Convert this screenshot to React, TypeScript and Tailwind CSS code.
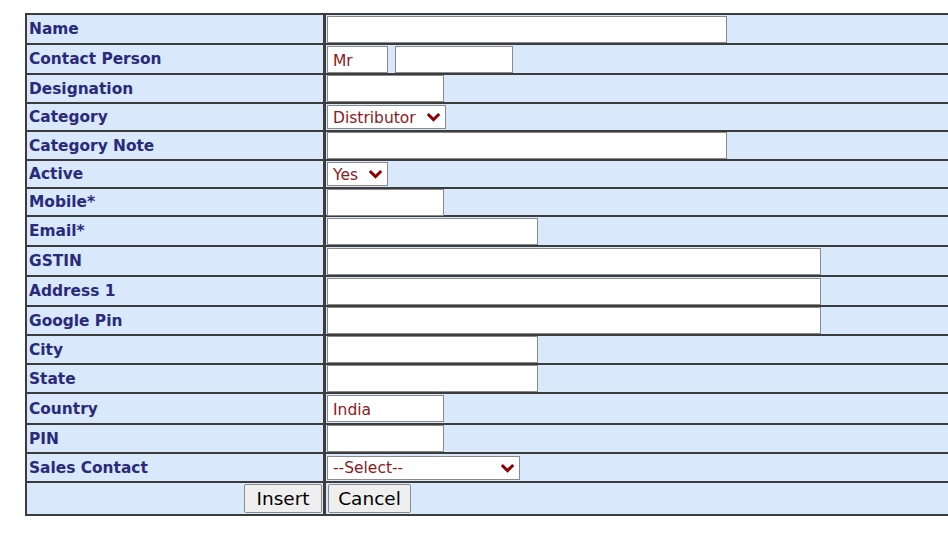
import React from "react";

type Field =
  | { label: string; kind: "text"; width: number; value?: string; h: number }
  | { label: string; kind: "select"; width: number; value: string; h: number }
  | { label: string; kind: "contact"; h: number };

const fields: Field[] = [
  { label: "Name", kind: "text", width: 400, h: 30 },
  { label: "Contact Person", kind: "contact", h: 30 },
  { label: "Designation", kind: "text", width: 117, h: 29 },
  { label: "Category", kind: "select", width: 119, value: "Distributor", h: 28 },
  { label: "Category Note", kind: "text", width: 400, h: 29 },
  { label: "Active", kind: "select", width: 61, value: "Yes", h: 28 },
  { label: "Mobile*", kind: "text", width: 117, h: 28 },
  { label: "Email*", kind: "text", width: 211, h: 30 },
  { label: "GSTIN", kind: "text", width: 494, h: 30 },
  { label: "Address 1", kind: "text", width: 494, h: 30 },
  { label: "Google Pin", kind: "text", width: 494, h: 29 },
  { label: "City", kind: "text", width: 211, h: 29 },
  { label: "State", kind: "text", width: 211, h: 29 },
  { label: "Country", kind: "text", width: 117, value: "India", h: 31 },
  { label: "PIN", kind: "text", width: 117, h: 29 },
  { label: "Sales Contact", kind: "select", width: 193, value: "--Select--", h: 29 },
];

const inputCls =
  "h-[27px] border border-[#8a8a8a] bg-white px-[5px] pt-[3px] text-[15.5px] text-[#8b1a1a] outline-none";

function Chevron() {
  return (
    <svg width="15" height="10" viewBox="0 0 15 10" className="shrink-0">
      <path d="M1.8 2 L7.5 7.6 L13.2 2" fill="none" stroke="#8b0000" strokeWidth="3" />
    </svg>
  );
}

function FakeSelect({ width, value }: { width: number; value: string }) {
  return (
    <div
      className="h-[24px] border border-[#8a8a8a] bg-white pl-[5px] pr-[4px] flex items-center justify-between text-[15.5px] text-[#8b1a1a]"
      style={{ width }}
    >
      <span className="pt-[3px]">{value}</span>
      <Chevron />
    </div>
  );
}

export default function App() {
  return (
    <div
      className="w-[948px] h-[552px] overflow-hidden bg-white pt-[13px] pl-[25px]"
      style={{ fontFamily: '"DejaVu Sans", Verdana, sans-serif' }}
    >
      <div className="w-[960px] border-2 border-[#3c3c3c] bg-[#d9e8fb]">
        {fields.map((f) => (
          <div
            key={f.label}
            className="flex border-b-2 border-[#3c3c3c]"
            style={{ height: f.h }}
          >
            <div className="w-[299px] shrink-0 border-r-[3px] border-[#3c3c3c] pl-[2px] pt-[2px] flex items-center text-[15.4px] font-bold text-[#2a2a7c]">
              {f.label}
            </div>
            <div className="flex-1 flex items-center pl-[1px] gap-[7px]">
              {f.kind === "text" && (
                <input
                  className={inputCls}
                  style={{ width: f.width }}
                  defaultValue={f.value ?? ""}
                />
              )}
              {f.kind === "select" && <FakeSelect width={f.width} value={f.value} />}
              {f.kind === "contact" && (
                <>
                  <input className={inputCls + " w-[61px]"} defaultValue="Mr" />
                  <input className={inputCls + " w-[118px]"} defaultValue="" />
                </>
              )}
            </div>
          </div>
        ))}
        <div className="flex h-[31px]">
          <div className="w-[299px] shrink-0 border-r-[3px] border-[#3c3c3c] flex items-center justify-end pr-[1px]">
            <button className="h-[29px] w-[78px] rounded-[2px] border border-[#8a8a8a] bg-[#efefef] text-[18.5px] text-black">
              Insert
            </button>
          </div>
          <div className="flex-1 flex items-center pl-[2px]">
            <button className="h-[29px] w-[83px] rounded-[2px] border border-[#8a8a8a] bg-[#efefef] text-[18.5px] text-black">
              Cancel
            </button>
          </div>
        </div>
      </div>
    </div>
  );
}
